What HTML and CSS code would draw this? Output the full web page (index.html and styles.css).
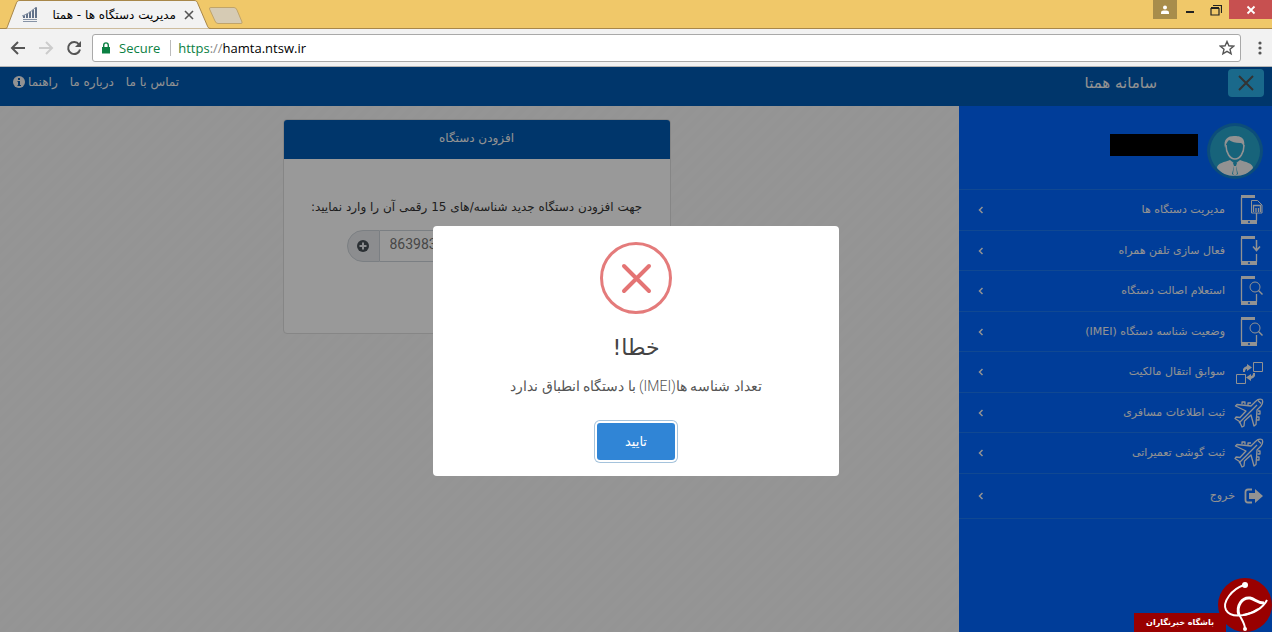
FILE: index.html
```html
<!DOCTYPE html>
<html lang="fa">
<head>
    <meta charset="UTF-8">
    <meta name="viewport" content="width=device-width, initial-scale=1.0">
    <title>مدیریت دستگاه ها - همتا</title>
    <link rel="stylesheet" href="styles.css">
</head>
<body>

    <!-- shared icons -->
    <svg class="defs" width="0" height="0">
        <symbol id="phone" viewBox="0 0 30 32">
            <path fill="currentColor" d="M7 1h14v3H7zM7 26h16v4H7z"/>
            <path fill="none" stroke="currentColor" stroke-width="1.300" d="M7.500 3v24M22.500 19v8"/>
            <circle cx="15" cy="28" r="1" fill="#06f"/>
        </symbol>
        <symbol id="search" viewBox="0 0 30 32">
            <circle cx="21" cy="12" r="5" fill="none" stroke="currentColor"/>
            <path fill="none" stroke="currentColor" stroke-width="1.500" d="M24.500 15.500l4 4"/>
        </symbol>
        <symbol id="plane" viewBox="0 0 30 32">
            <g fill="none" stroke="currentColor" stroke-width="1.300" stroke-linejoin="round">
                <path d="M28 2.500c-3-1-5 .5-6.500 2L17 9 3 7.500 1.500 9 12 14l-6 6.500-4-.5-1 1.500 4.500 3L8 30l2-1 .5-5L17 18l3 11 2-1.500 1-14.500 4-4c1.500-2 2.500-4 1-6.500z"/>
                <path d="M5 26L23 8M24 3.500l3 3M8 7V5h3v2.500M14 8V6h3M24 14h2v3h-2.500M23 20h2v3h-2.500"/>
            </g>
        </symbol>
        <symbol id="angle" viewBox="0 0 6 8">
            <path fill="none" stroke="currentColor" stroke-width="1.500" d="M4.500 1L1.500 4l3 3"/>
        </symbol>
    </svg>

    <div class="browser">
        <div class="tabstrip">
            <div class="tab">
                <svg class="tab-shape" viewBox="0 0 206 29"><path d="M0 28.500C2 28.500 2 28 3 25L11 4C12 1 13 .5 15 .5H189C191 .5 192 1 193 4L202 25C203 28 204 28.500 206 28.500"/></svg>
                <svg class="favicon" width="16" height="16" viewBox="0 0 16 16"><path fill="#62728a" d="M1 9l2-1v3H1zM4 7l2-1v5H4zM7 5l2-1v7H7zM10 3l2-1v9h-2zM13 1l2-1v11h-2z"/><path stroke="#8793a5" fill="none" d="M0 9C6 7 10 4 14 0M1 12.500h14M1 14.500h14"/></svg>
                <span class="tab-title" dir="rtl">مدیریت دستگاه ها - همتا</span>
                <button class="tab-close" aria-label="Close tab"><svg width="10" height="10" viewBox="0 0 10 10"><path d="M1 1l8 8M9 1L1 9" stroke="#555" stroke-width="1.600"/></svg></button>
            </div>
            <button class="new-tab" aria-label="New tab"><svg width="36" height="18" viewBox="0 0 36 18"><path d="M3 .5H26Q28 .5 29 3L34 15Q34.500 16.500 33 16.500H10Q8 16.500 7 14L1.500 2Q1 .5 3 .5z" fill="#d6cbb4" stroke="#c0a46a"/></svg></button>
            <div class="window-controls">
                <button class="user" aria-label="User"><svg width="10" height="10" viewBox="0 0 10 10"><circle cx="5" cy="2.500" r="2" fill="#fff"/><path d="M1 9V7.500Q1 5.500 3.500 5.500h3Q9 5.500 9 7.500V9z" fill="#fff"/></svg></button>
                <button aria-label="Minimize"><svg width="10" height="10" viewBox="0 0 10 10"><path d="M1 6h8v2H1z" fill="#222"/></svg></button>
                <button aria-label="Restore"><svg width="12" height="12" viewBox="0 0 12 12"><path d="M1 4.500h8V11H1zM1 3.500h8M3 1.500h8.500V9" fill="none" stroke="#222" stroke-width="1.200"/></svg></button>
                <button class="close" aria-label="Close"><svg width="10" height="10" viewBox="0 0 10 10"><path d="M1.500 1.500l7 7M8.500 1.500l-7 7" stroke="#fff" stroke-width="1.800"/></svg></button>
            </div>
        </div>
        <div class="toolbar">
            <button aria-label="Back"><svg width="16" height="16" viewBox="0 0 16 16"><path d="M15 8H2M8 2L2 8l6 6" fill="none" stroke="#555" stroke-width="2"/></svg></button>
            <button aria-label="Forward"><svg width="16" height="16" viewBox="0 0 16 16"><path d="M1 8h13M8 2l6 6-6 6" fill="none" stroke="#ccc" stroke-width="2"/></svg></button>
            <button aria-label="Reload"><svg width="16" height="16" viewBox="0 0 16 16"><path d="M13 4.500A6 6 0 1 0 14 9.500" fill="none" stroke="#555" stroke-width="2"/><path d="M15 1v6H9z" fill="#555"/></svg></button>
            <div class="address">
                <svg width="10" height="12" viewBox="0 0 10 12"><path d="M1 5h8v6.500H1z" fill="#0b8043"/><path d="M2.700 5V3.200a2.300 2.300 0 0 1 4.600 0V5" fill="none" stroke="#0b8043" stroke-width="1.400"/></svg>
                <span class="secure">Secure</span>
                <span class="url"><span class="scheme">https</span><span class="slashes">://</span>hamta.ntsw.ir</span>
                <button class="star" aria-label="Bookmark"><svg width="16" height="16" viewBox="0 0 16 16"><path d="M8 1.500l1.900 4.300 4.700.4-3.600 3.100 1.100 4.600L8 11.400l-4.100 2.500L5 9.300 1.400 6.200l4.700-.4z" fill="none" stroke="#555" stroke-width="1.400"/></svg></button>
            </div>
            <button class="menu" aria-label="Menu"><svg width="4" height="14" viewBox="0 0 4 14"><g fill="#555"><circle cx="2" cy="2" r="1.600"/><circle cx="2" cy="7" r="1.600"/><circle cx="2" cy="12" r="1.600"/></g></svg></button>
        </div>
    </div>

    <div class="page" dir="rtl">
        <header class="header">
            <button class="toggle" aria-label="بستن منو"><svg width="16" height="16" viewBox="0 0 16 16"><path d="M1 1l14 14M15 1L1 15" stroke="#555" stroke-width="2"/></svg></button>
            <h1>سامانه همتا</h1>
            <nav class="links">
                <a href="#">تماس با ما</a>
                <a href="#">درباره ما</a>
                <a href="#">راهنما <svg width="12" height="12" viewBox="0 0 12 12"><circle cx="6" cy="6" r="6" fill="currentColor"/><path d="M5 2h2v2H5zM4.500 5H7v4h1v1H4.500V9H5V6h-.5z" fill="#005ab2"/></svg></a>
            </nav>
        </header>

        <div class="body">
            <aside class="sidebar">
                <div class="profile">
                    <svg class="avatar" viewBox="0 0 56 56">
                        <circle cx="28" cy="28" r="28" fill="#1480cc"/>
                        <circle cx="28" cy="28" r="25" fill="#27a5cc"/>
                        <path d="M10 45c0-5 8-6 13-8l5 4 5-4c5 2 13 3 13 8-4 5-10 8-18 8s-14-3-18-8z" fill="#f4f4f4"/>
                        <path d="M19 22c0 8 4 14 9 14s9-6 9-14" fill="#27a5cc" stroke="#f4f4f4" stroke-width="1.500"/>
                        <path d="M18 25c-2-9 3-12 9-12s12 1 10 12c-1-4-2-5-4-5-5 0-8-1-11-3-2 2-3 4-4 8z" fill="#f4f4f4"/>
                        <path d="M26 40h4l-1 3 2 8-3 2-3-2 2-8z" fill="#27a5cc"/>
                        <path d="M27 43h2l1 8-2 2-2-2z" fill="#f4f4f4"/>
                    </svg>
                    <span class="name"></span>
                </div>
                <ul class="menu-list">
                    <li><a href="#"><svg class="icon" viewBox="0 0 30 32"><use href="#phone"/><path d="M17.500 6.500h6l4.500 4.500v8H17.500z" fill="#06f" stroke="currentColor"/><path d="M19.500 18v-6.500h7V18M22 18v-4M24.500 18v-4" fill="none" stroke="currentColor" stroke-width="1.300"/></svg>مدیریت دستگاه ها<svg class="angle"><use href="#angle"/></svg></a></li>
                    <li><a href="#"><svg class="icon" viewBox="0 0 30 32"><use href="#phone"/><path d="M22.500 5v10M19 11.500l3.500 4 3.500-4" fill="none" stroke="currentColor" stroke-width="1.500"/></svg>فعال سازی تلفن همراه<svg class="angle"><use href="#angle"/></svg></a></li>
                    <li><a href="#"><svg class="icon" viewBox="0 0 30 32"><use href="#phone"/><use href="#search"/></svg>استعلام اصالت دستگاه<svg class="angle"><use href="#angle"/></svg></a></li>
                    <li><a href="#"><svg class="icon" viewBox="0 0 30 32"><use href="#phone"/><use href="#search"/></svg>وضعیت شناسه دستگاه (IMEI)<svg class="angle"><use href="#angle"/></svg></a></li>
                    <li><a href="#"><svg class="icon" viewBox="0 0 30 32"><path d="M19.500 6.500h9v9h-9zM2.500 18.500h9v9h-9z" fill="none" stroke="currentColor"/><path d="M9 16v-3q1-2 4-3V8l5 3.500-5 3.500v-2q-2 0-2 3zM21 17v3q-1 2-4 3v2l-5-3.500 5-3.500v2q2 0 2-3z" fill="currentColor"/></svg>سوابق انتقال مالکیت<svg class="angle"><use href="#angle"/></svg></a></li>
                    <li><a href="#"><svg class="icon"><use href="#plane"/></svg>ثبت اطلاعات مسافری<svg class="angle"><use href="#angle"/></svg></a></li>
                    <li><a href="#"><svg class="icon"><use href="#plane"/></svg>ثبت گوشی تعمیراتی<svg class="angle"><use href="#angle"/></svg></a></li>
                    <li class="exit"><a href="#"><svg class="icon-exit" viewBox="0 0 20 16"><path d="M8 1.500H4Q1.500 1.500 1.500 4v8q0 2.500 2.500 2.500h4" fill="none" stroke="currentColor" stroke-width="1.800"/><path d="M5 5h6V1l8 7-8 7v-4H5z" fill="currentColor"/></svg>خروج<svg class="angle"><use href="#angle"/></svg></a></li>
                </ul>
            </aside>

            <main class="main">
                <form class="card">
                    <h2>افزودن دستگاه</h2>
                    <div class="card-body">
                        <label for="imei">جهت افزودن دستگاه جدید شناسه/های 15 رقمی آن را وارد نمایید:</label>
                        <div class="input-group" dir="ltr">
                            <button type="button" aria-label="افزودن"><svg width="12" height="12" viewBox="0 0 12 12"><circle cx="6" cy="6" r="6" fill="#495057"/><path d="M5 2.500h2V5h2.500v2H7v2.500H5V7H2.500V5H5z" fill="#e9ecef"/></svg></button>
                            <input id="imei" type="text" value="863983">
                        </div>
                    </div>
                </form>
            </main>
        </div>

        <div class="overlay">
            <div class="modal" role="dialog" aria-labelledby="modal-title">
                <svg width="72" height="72" viewBox="0 0 72 72"><circle cx="36" cy="36" r="34.500" fill="none" stroke="#e47b7b" stroke-width="3"/><path d="M24 24l25 25M49 24L24 49" stroke="#e47474" stroke-width="4" stroke-linecap="round"/></svg>
                <h2 id="modal-title">خطا!</h2>
                <p>تعداد شناسه ها(IMEI) با دستگاه انطباق ندارد</p>
                <button type="button">تایید</button>
            </div>
        </div>

        <div class="watermark">
            <span>باشگاه خبرنگاران</span>
            <svg viewBox="0 0 54 54">
                <circle cx="27" cy="27" r="27" fill="#900"/>
                <path d="M26 7C14 11 4 24 8 32c5 9 22 6 32-1" fill="none" stroke="#fff" stroke-width="2"/>
                <path d="M21 37c-3-9 3-18 11-17 5 1 7 5 14 5" fill="none" stroke="#fff" stroke-width="3"/>
                <path d="M49 22c-4 8-14 14-24 15M21 36c2 5 6 9 6 15" fill="none" stroke="#fff" stroke-width="2"/>
                <circle cx="27" cy="7" r="3" fill="#fff"/>
                <circle cx="27" cy="51" r="2" fill="#fff"/>
            </svg>
        </div>
    </div>

</body>
</html>
```
FILE: styles.css
```css
* {
    box-sizing: border-box;
}
body {
    margin: 0;
    min-height: 100vh;
    display: flex;
    flex-direction: column;
    font-family: "DejaVu Sans", sans-serif;
    font-size: 12px;
}
button {
    border: 0;
    padding: 0;
    background: none;
    font-family: inherit;
    cursor: pointer;
    display: flex;
    align-items: center;
    justify-content: center;
}
a {
    color: inherit;
    text-decoration: none;
}
svg {
    flex-shrink: 0;
}
.defs {
    position: absolute;
}

/* Browser window */
.tabstrip {
    height: 29px;
    display: flex;
    padding-left: 4px;
    background-color: #f0c869;
    border-bottom: 1px solid #a8874a;
}
.tab {
    position: relative;
    width: 208px;
    height: 29px;
    display: flex;
    align-items: center;
    gap: 8px;
    padding: 0 18px;
}
.tab-shape {
    position: absolute;
    left: 0;
    top: 0;
    width: 100%;
    height: 29px;
    fill: #f2f2f2;
    stroke: #a8874a;
}
.favicon,
.tab-title,
.tab-close {
    position: relative;
}
.tab-title {
    flex: 1;
    font-size: 12px;
    white-space: nowrap;
}
.new-tab {
    margin: 7px 0 0 -4px;
    height: 18px;
}
.window-controls {
    display: flex;
    margin-left: auto;
    height: 19px;
}
.window-controls button {
    width: 26px;
}
.window-controls .user {
    width: 24px;
    background-color: #a88d4b;
}
.window-controls .close {
    width: 43px;
    background-color: #c75050;
}
.toolbar {
    height: 38px;
    display: flex;
    align-items: center;
    gap: 12px;
    padding: 0 5px 0 10px;
    background-color: #f2f2f2;
    border-bottom: 1px solid #b6b6b6;
}
.address {
    flex: 1;
    height: 28px;
    margin-left: -2px;
    display: flex;
    align-items: center;
    padding: 0 5px 0 8px;
    background-color: #fff;
    border: 1px solid #a9a9a9;
    border-radius: 3px;
    font-family: "Open Sans", sans-serif;
    font-size: 13px;
}
.secure {
    margin-left: 8px;
    padding-right: 10px;
    line-height: 16px;
    color: #0b8043;
    border-right: 1px solid #bbb;
}
.url {
    margin-left: 7px;
}
.scheme {
    color: #0b8043;
}
.slashes {
    color: #888;
}
.star {
    margin-left: auto;
}
.menu {
    width: 14px;
}

/* Page */
.page {
    position: relative;
    flex: 1;
    display: flex;
    flex-direction: column;
}
.header {
    height: 39px;
    display: flex;
    align-items: flex-start;
    padding: 2px 8px 0 13px;
    background-color: #005ab2;
    color: #f4f4f4;
}
.toggle {
    width: 36px;
    height: 28px;
    border-radius: 4px;
    background-color: #2cb0e8;
}
.header h1 {
    margin: 0 71px 0 0;
    font-size: 15px;
    line-height: 28px;
    font-weight: normal;
}
.links {
    display: flex;
    gap: 12px;
    margin-right: auto;
    font-size: 12px;
    line-height: 26px;
}
.links a {
    display: flex;
    align-items: center;
    gap: 3px;
}
.body {
    flex: 1;
    display: flex;
}
.sidebar {
    width: 313px;
    background-color: #0066ff;
    color: #f4f4f4;
}
.profile {
    height: 84px;
    display: flex;
    align-items: flex-start;
    padding: 17px 9px 0 0;
    border-bottom: 1px solid #1c78f4;
}
.avatar {
    width: 56px;
    height: 56px;
}
.name {
    width: 88px;
    height: 22px;
    margin: 11px 9px 0 0;
    background-color: #000;
}
.menu-list {
    list-style: none;
    margin: 0;
    padding: 0;
}
.menu-list li {
    height: 41px;
    border-bottom: 1px solid #1c78f4;
}
.menu-list li:nth-child(even) {
    height: 40px;
}
.menu-list a {
    height: 100%;
    display: flex;
    align-items: center;
    gap: 9px;
    padding: 0 8px 0 19px;
    font-size: 11px;
    line-height: 16px;
}
.menu-list li.exit {
    height: 45px;
}
.icon {
    width: 30px;
    height: 32px;
}
.icon-exit {
    width: 20px;
    height: 16px;
}
.angle {
    width: 6px;
    height: 8px;
    margin-right: auto;
}
.main {
    flex: 1;
    padding: 13px 6px 0 0;
    background: repeating-linear-gradient(135deg, #f7f7f7 0 5px, #f8f8f8 5px 10px);
}
.card {
    width: 388px;
    min-height: 215px;
    margin: 0 auto;
    background-color: #fff;
    border: 1px solid #dfdfdf;
    border-radius: 4px;
}
.card h2 {
    margin: 0;
    padding-bottom: 3px;
    background-color: #005ab2;
    border-radius: 3px 3px 0 0;
    color: #f4f4f4;
    font-size: 12px;
    line-height: 36px;
    font-weight: normal;
    text-align: center;
}
.card-body {
    padding: 36px 16px;
    text-align: center;
}
.card label {
    font-size: 12px;
    line-height: 24px;
    color: #333;
    white-space: nowrap;
}
.input-group {
    display: flex;
    width: 260px;
    height: 32px;
    margin: 11px auto 0;
}
.input-group button {
    width: 33px;
    background-color: #e9ecef;
    border: 1px solid #ced4da;
    border-radius: 16px 0 0 16px;
}
.input-group input {
    flex: 1;
    min-width: 0;
    padding: 0 10px 4px;
    border: 1px solid #ced4da;
    border-left: 0;
    border-radius: 0 16px 16px 0;
    font-family: Roboto, sans-serif;
    font-size: 14px;
    color: #777;
}

/* Error dialog */
.overlay {
    position: absolute;
    inset: 0;
    display: flex;
    align-items: center;
    justify-content: center;
    padding-top: 3px;
    background-color: rgba(0, 0, 0, 0.4);
}
.modal {
    width: 406px;
    display: flex;
    flex-direction: column;
    align-items: center;
    padding: 16px;
    background-color: #fff;
    border-radius: 4px;
}
.modal h2 {
    margin: 16px 0 0;
    font-size: 22px;
    line-height: 36px;
    font-weight: normal;
    color: #444;
}
.modal p {
    margin: 8px 0 25px;
    font-family: Roboto, "DejaVu Sans", sans-serif;
    font-size: 14px;
    font-weight: 300;
    line-height: 24px;
    color: #555;
}
.modal button {
    width: 78px;
    height: 37px;
    background-color: #3085d6;
    border-radius: 3px;
    color: #fff;
    font-size: 13px;
    box-shadow: 0 0 0 2px #fff, 0 0 0 3px #a5c3dc;
}

/* News agency mark */
.watermark {
    position: absolute;
    right: 0;
    bottom: 0;
    display: flex;
    flex-direction: row-reverse;
    align-items: flex-end;
}
.watermark svg {
    position: relative;
    width: 54px;
    height: 54px;
}
.watermark span {
    margin-right: -8px;
    padding: 0 12px;
    background-color: #900;
    color: #fff;
    font-size: 8px;
    line-height: 19px;
    font-weight: bold;
    white-space: nowrap;
}
```
